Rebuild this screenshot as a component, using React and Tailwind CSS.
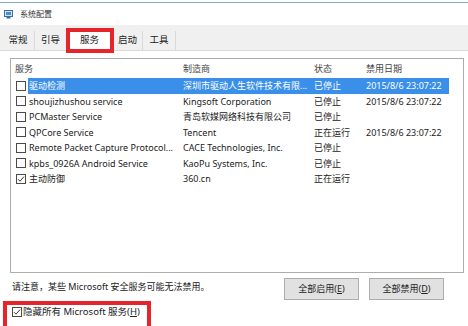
import React from "react";

const rows = [
  { name: "驱动检测", maker: "深圳市驱动人生软件技术有限...", status: "已停止", date: "2015/8/6 23:07:22", selected: true },
  { name: "shoujizhushou service", maker: "Kingsoft Corporation", status: "已停止", date: "2015/8/6 23:07:22" },
  { name: "PCMaster Service", maker: "青岛软媒网络科技有限公司", status: "已停止", date: "" },
  { name: "QPCore Service", maker: "Tencent", status: "正在运行", date: "2015/8/6 23:07:22" },
  { name: "Remote Packet Capture Protocol...", maker: "CACE Technologies, Inc.", status: "已停止", date: "" },
  { name: "kpbs_0926A Android Service", maker: "KaoPu Systems, Inc.", status: "已停止", date: "" },
  { name: "主动防御", maker: "360.cn", status: "正在运行", date: "", checked: true },
];

const tabs = [
  { label: "常规", w: "w-[33px]" },
  { label: "引导", w: "w-[32px]" },
  { label: "服务", w: "w-[46px]", active: true },
  { label: "启动", w: "w-[30px]" },
  { label: "工具", w: "w-[33px]" },
];

function Check({ checked }) {
  return (
    <span className="w-[10px] h-[10px] shrink-0 border border-[#4a4a4a] bg-white flex items-center justify-center">
      {checked && (
        <svg width="8" height="8" viewBox="0 0 8 8">
          <path d="M1 4.2 L3 6.2 L7 1.6" fill="none" stroke="#333" strokeWidth="1" />
        </svg>
      )}
    </span>
  );
}

function AppIcon() {
  return (
    <svg width="9" height="9" viewBox="0 0 9 9">
      <rect x="0.5" y="0.5" width="8" height="6" fill="#cfe3f3" stroke="#3b6e9c" />
      <rect x="2" y="2" width="5" height="3" fill="#4f8fc8" />
      <rect x="2.5" y="7" width="4" height="1.5" fill="#3b6e9c" />
    </svg>
  );
}

export default function App() {
  return (
    <div
      className="w-[468px] h-[326px] bg-white relative overflow-hidden text-[#222] flex flex-col"
      style={{ fontFamily: '"Noto Sans", "Noto Sans CJK SC", sans-serif' }}
    >
      <div className="h-[2px] shrink-0" />
      <div className="border-t border-[#7ea9c8] h-[23px] shrink-0 flex items-center pl-[4px] gap-[7px]">
        <AppIcon />
        <span className="text-[8px] text-[#333]">系统配置</span>
      </div>

      <div className="h-[26px] shrink-0 bg-[#f0f0f0] border-b border-[#d9d9d9] flex items-end pl-[2px]">
        {tabs.map((t) =>
          t.active ? (
            <div
              key={t.label}
              className={`${t.w} h-[22px] -mb-px bg-white border-r border-[#d9d9d9] flex items-center justify-center text-[9.5px]`}
            >
              {t.label}
            </div>
          ) : (
            <div
              key={t.label}
              className={`${t.w} h-[19px] border-r border-[#d9d9d9] flex items-center justify-center text-[9.5px]`}
            >
              {t.label}
            </div>
          )
        )}
      </div>

      <div className="ml-[10px] mt-[7px] w-[454px] h-[215px] shrink-0 border border-[#adadad] text-[9px]">
        <div className="h-[19px] flex items-center text-[#444]">
          <div className="w-[172px] pl-[4px]">服务</div>
          <div className="w-[131px]">制造商</div>
          <div className="w-[52px]">状态</div>
          <div className="flex-1">禁用日期</div>
        </div>
        {rows.map((r) => (
          <div key={r.name} className="h-[15.5px] flex items-center pl-[5px] whitespace-nowrap">
            <Check checked={r.checked} />
            <div
              className={`ml-[2px] h-full flex items-center ${
                r.selected ? "bg-[#3a8fe8] text-white" : ""
              }`}
            >
              <div className="w-[155px] pl-[1px] overflow-hidden">{r.name}</div>
              <div className="w-[131px] overflow-hidden">{r.maker}</div>
              <div className="w-[52px]">{r.status}</div>
              <div className="w-[83px]">{r.date}</div>
            </div>
          </div>
        ))}
      </div>

      <div className="h-[22px] mt-[5px] shrink-0 flex text-[9px]">
        <div className="pl-[12px] pt-[2px] w-[284px]">请注意，某些 Microsoft 安全服务可能无法禁用。</div>
        <button className="w-[75px] h-[22px] bg-[#e1e1e1] border border-[#adadad] text-[9px]">
          全部启用(<span className="underline">E</span>)
        </button>
        <button className="ml-[10px] w-[75px] h-[22px] bg-[#e1e1e1] border border-[#adadad] text-[9px]">
          全部禁用(<span className="underline">D</span>)
        </button>
      </div>

      <div className="mt-[6px] pl-[12px] flex items-center gap-[1px] text-[9.5px] h-[12px]">
        <Check checked />
        <span>
          隐藏所有 Microsoft 服务(<span className="underline">H</span>)
        </span>
      </div>

      <div className="absolute left-[66px] top-[28px] w-[48px] h-[25px] border-[4px] border-[#e5252b]" />
      <div className="absolute left-[3px] top-[301px] w-[148px] h-[30px] border-[4px] border-[#e5252b]" />
    </div>
  );
}
